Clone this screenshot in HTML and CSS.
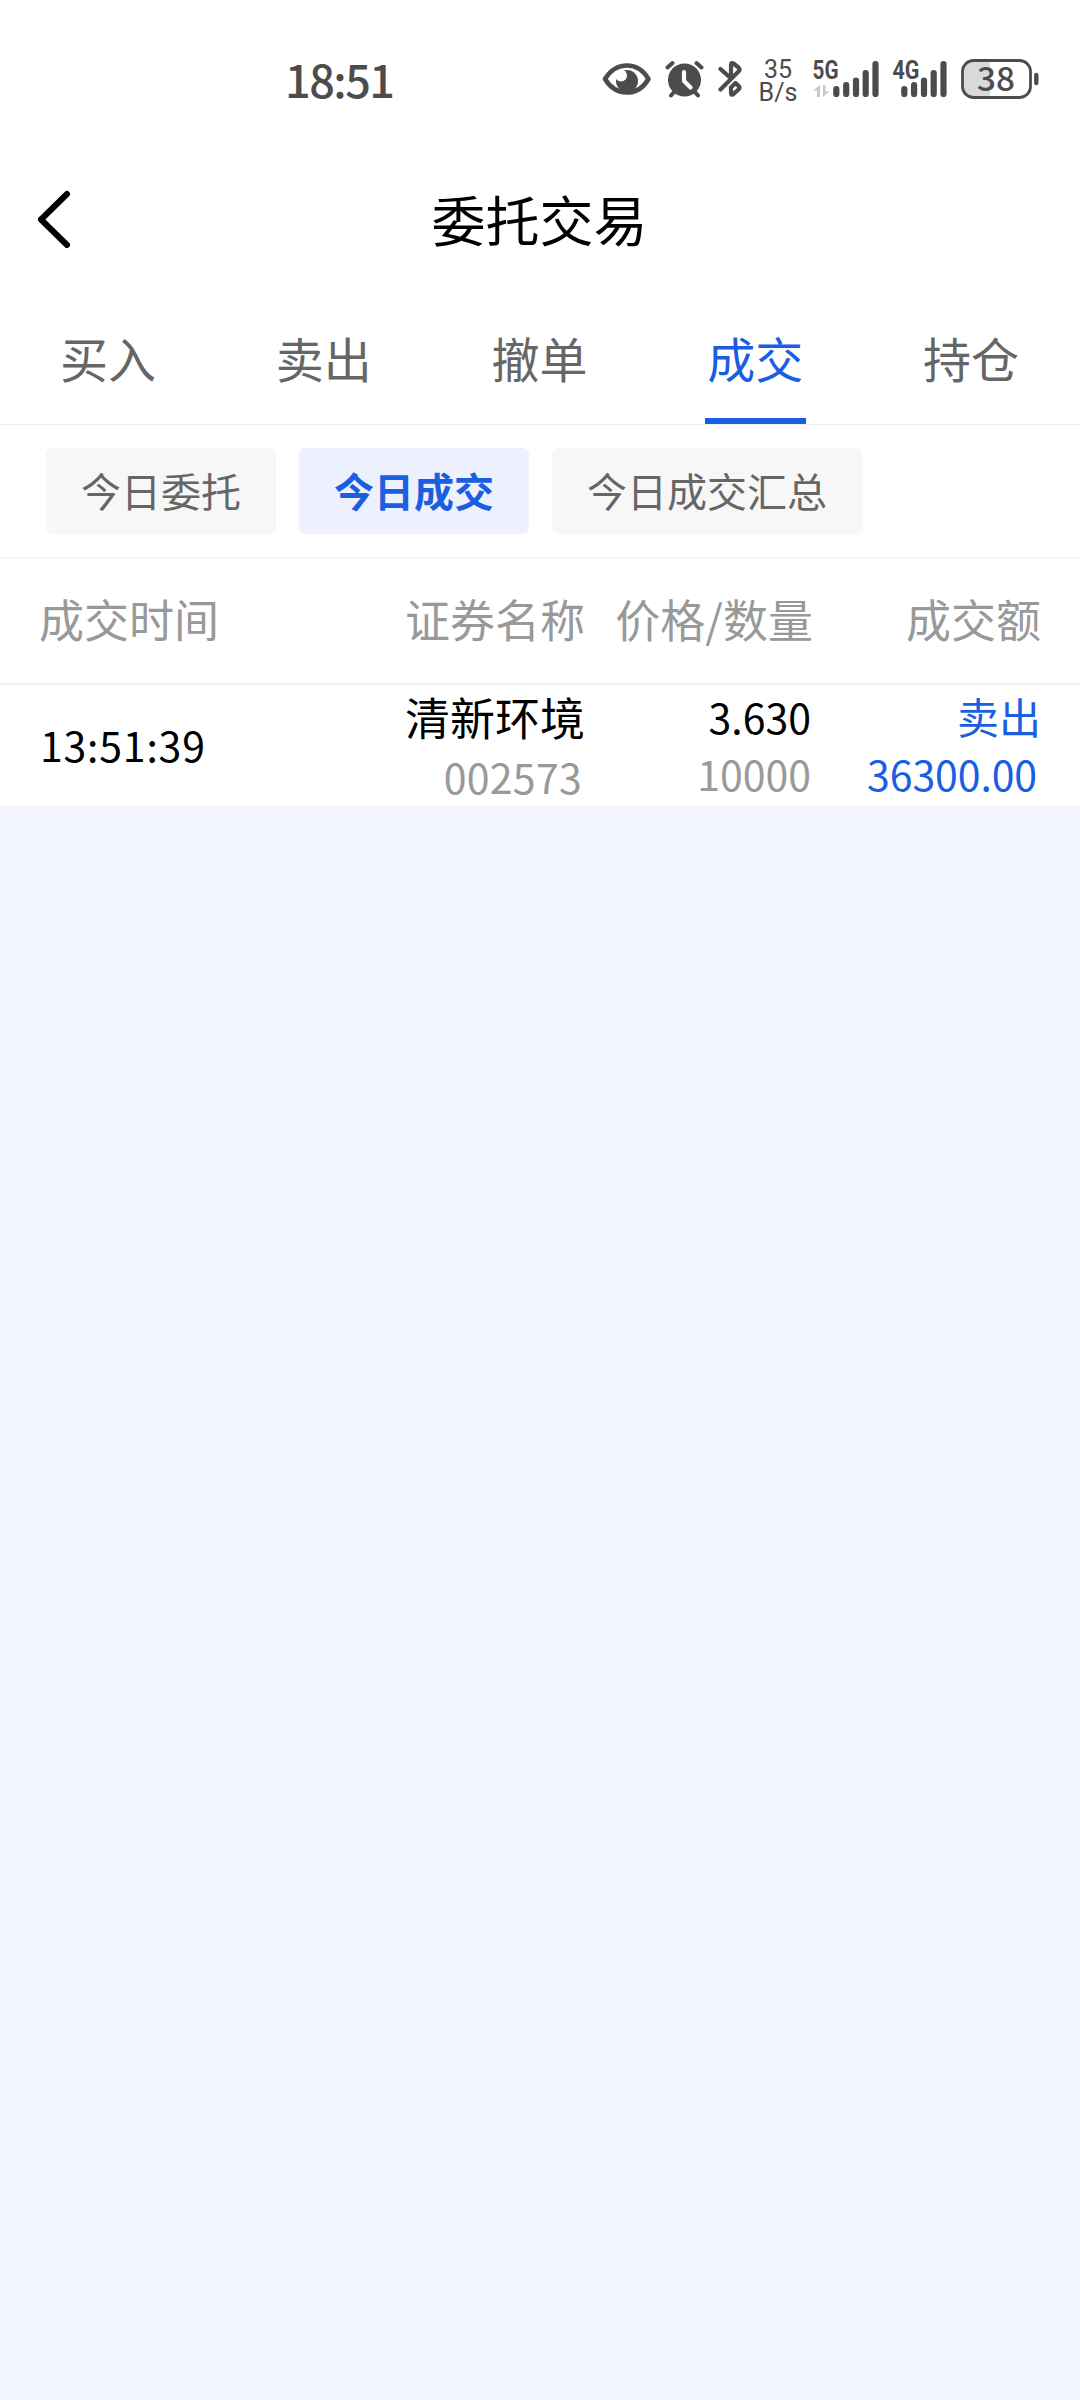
FILE: index.html
```html
<!DOCTYPE html>
<html lang="zh-CN">
<head>
<meta charset="utf-8">
<title>委托交易</title>
<link rel="stylesheet" href="styles.css">
</head>
<body>
<header class="status">
  <span class="clock">18:51</span>
  <div class="status-icons">
    <svg class="eye" width="50" height="40" viewBox="602 58 50 40">
      <path d="M605 79C616 61 638 61 648.500 79C638 97 616 97 605 79Z" fill="none" stroke="#4c4c4c" stroke-width="4.600" stroke-linejoin="round"/>
      <circle cx="627" cy="81" r="11" fill="#4c4c4c"/>
      <circle cx="621" cy="75.500" r="6" fill="#fff"/>
    </svg>
    <svg class="alarm" width="40" height="40" viewBox="665 58 40 40">
      <circle cx="684.500" cy="80" r="16.500" fill="#4c4c4c"/>
      <path d="M667.500 67.500L672.500 63M701.500 67.500L696.500 63M675 91L671 95.500M694 91L698 95.500" stroke="#4c4c4c" stroke-width="4" stroke-linecap="round"/>
      <path d="M684 72V81L690.500 87.500" fill="none" stroke="#fff" stroke-width="4.200" stroke-linecap="round" stroke-linejoin="round"/>
    </svg>
    <svg class="bluetooth" width="26" height="40" viewBox="717 58 26 40">
      <path d="M720.500 69L731 78.500M720.500 89.500L738.500 71.500Q740.500 69.500 738.500 67.500L733.500 63.500Q731 62 731 65V78M731 87.500V92.500Q731 96 733.500 94L738.500 89.500Q740.500 87.500 738.500 86L735.500 83L731 87.500" fill="none" stroke="#4c4c4c" stroke-width="4.200" stroke-linecap="round" stroke-linejoin="round"/>
    </svg>
    <div class="speed"><span>35</span><span>B/s</span></div>
    <svg class="signal" width="68" height="44" viewBox="812 54 68 44">
      <text class="net" x="812.500" y="79" textLength="26" lengthAdjust="spacingAndGlyphs">5G</text>
      <path d="M813 90.500L820 85V97H817V90.500ZM823 85H825.500V91.500H829.500L823 97Z" fill="#cacaca"/>
      <path d="M836.300 89V94M846.200 85.200V94M856 80.500V94M865.700 73V94M875.500 64V94" stroke="#4c4c4c" stroke-width="6.200" stroke-linecap="round"/>
    </svg>
    <svg class="signal-second" width="56" height="44" viewBox="892 54 56 44">
      <text class="net" x="892.500" y="79" textLength="27" lengthAdjust="spacingAndGlyphs">4G</text>
      <path d="M904.300 89V94M914.100 85.200V94M924 80.500V94M933.700 73V94M943.500 64V94" stroke="#4c4c4c" stroke-width="6.200" stroke-linecap="round"/>
    </svg>
    <svg class="battery" width="78" height="52" viewBox="961 54 78 52">
      <path d="M990 61H974Q963 61 963 72V86Q963 97 974 97H990Z" fill="#d9d9d9"/>
      <rect x="962.500" y="60.500" width="68" height="37" rx="11" fill="none" stroke="#4c4c4c" stroke-width="2.800"/>
      <path d="M1036.300 75V83" stroke="#4c4c4c" stroke-width="4.400" stroke-linecap="round"/>
      <text class="level" x="977" y="91" textLength="38" lengthAdjust="spacingAndGlyphs">38</text>
    </svg>
  </div>
</header>

<div class="titlebar">
  <svg class="back" width="36" height="60" viewBox="36 189 36 60">
    <path d="M67 194L41 219.500L67 245" fill="none" stroke="#000" stroke-width="6" stroke-linecap="round" stroke-linejoin="round"/>
  </svg>
  <h1 class="title">委托交易</h1>
</div>

<nav class="tabs">
  <a class="tab">买入</a>
  <a class="tab">卖出</a>
  <a class="tab">撤单</a>
  <a class="tab active">成交</a>
  <a class="tab">持仓</a>
</nav>

<div class="chips">
  <span class="chip">今日委托</span>
  <span class="chip selected">今日成交</span>
  <span class="chip">今日成交汇总</span>
</div>

<main class="table">
  <div class="row head">
    <span>成交时间</span>
    <span>证券名称</span>
    <span>价格/数量</span>
    <span>成交额</span>
  </div>
  <div class="row entry">
    <span class="time">13:51:39</span>
    <div class="cell stock"><span class="name">清新环境</span><span class="code">002573</span></div>
    <div class="cell price"><span>3.630</span><span class="qty">10000</span></div>
    <div class="cell amount"><span class="side">卖出</span><span class="sum">36300.00</span></div>
  </div>
</main>
</body>
</html>
```
FILE: styles.css
```css
* { box-sizing: border-box; }
body {
  margin: 0;
  width: 1080px;
  min-height: 2400px;
  background: #f3f6ff;
  color: #000;
  font-family: "Noto Sans CJK SC", sans-serif;
}
.status {
  height: 158px;
  padding: 54px 41px 0 285px;
  display: flex;
  justify-content: space-between;
  align-items: flex-start;
  background: #fff;
  color: #4c4c4c;
}
.clock {
  font-size: 45px;
  font-weight: 500;
  line-height: 40px;
  letter-spacing: -1.500px;
  margin: 5px 0 0 0;
}
.status-icons { display: flex; align-items: flex-start; }
.status-icons svg { display: block; flex: none; }
.eye, .alarm, .bluetooth { margin-top: 4px; }
.alarm { margin-left: 13px; }
.bluetooth { margin-left: 12px; }
.speed {
  width: 44px;
  margin: 4px 0 0 13px;
  display: flex;
  flex-direction: column;
  align-items: center;
  font: 25px/23px Roboto, sans-serif;
}
.signal { margin-left: 12px; }
.signal-second { margin-left: 12px; }
.battery { margin-left: 13px; }
.net { font: 700 25px Roboto, sans-serif; fill: #4c4c4c; }
.level { font: 500 33px "Noto Sans CJK SC", sans-serif; fill: #4c4c4c; }
.titlebar {
  height: 124px;
  padding: 0 36px;
  display: grid;
  grid-template-columns: 36px 1fr 36px;
  align-items: center;
  background: #fff;
}
.back { margin-top: -2px; }
.title {
  margin: 0;
  font-size: 54px;
  font-weight: 400;
  line-height: 72px;
  text-align: center;
  padding: 0 1px 3px 0;
}
.tabs {
  height: 143px;
  padding-right: 1px;
  display: grid;
  grid-template-columns: repeat(5, 1fr);
  justify-items: center;
  background: #fff;
  border-bottom: 1px solid #ededee;
}
.tab {
  width: 101px;
  height: 142px;
  padding-top: 39px;
  font-size: 48px;
  line-height: 72px;
  text-align: center;
  color: #666;
}
.tab.active { color: #1a5ee2; border-bottom: 6px solid #1a5ee2; }
.chips {
  height: 133px;
  padding: 23px 46px;
  display: flex;
  gap: 23px;
  background: #fff;
  border-bottom: 1px solid #efeff0;
}
.chip {
  height: 86px;
  padding: 0 35px;
  border-radius: 6px;
  background: #f7f7f7;
  color: #666;
  font-size: 40px;
  line-height: 84px;
}
.chip.selected { background: #ecf1fd; color: #1a5ee2; font-weight: 700; }
.row {
  padding: 0 39px;
  display: grid;
  grid-template-columns: 300px 246px 228px 228px;
  text-align: right;
  background: #fff;
}
.row > :first-child { text-align: left; }
.head {
  height: 127px;
  font-size: 45px;
  line-height: 122px;
  color: #999;
  border-bottom: 2px solid #f0f1f4;
}
.entry { height: 121px; font-size: 41px; }
.time { line-height: 118px; letter-spacing: 0.800px; padding-left: 1px; }
.cell { display: flex; flex-direction: column; align-items: flex-end; padding-top: 2px; line-height: 58px; }
.name { font-size: 45px; padding-top: 1px; }
.code { color: #999; margin-top: 1px; letter-spacing: 0.300px; }
.stock .code { padding-right: 3px; }
.qty { color: #999; margin-top: -1px; }
.price { padding-right: 2px; }
.amount { color: #1a5ee2; }
.side { font-size: 42px; }
.sum { padding-right: 4px; letter-spacing: -0.100px; margin-top: -1px; }
```
